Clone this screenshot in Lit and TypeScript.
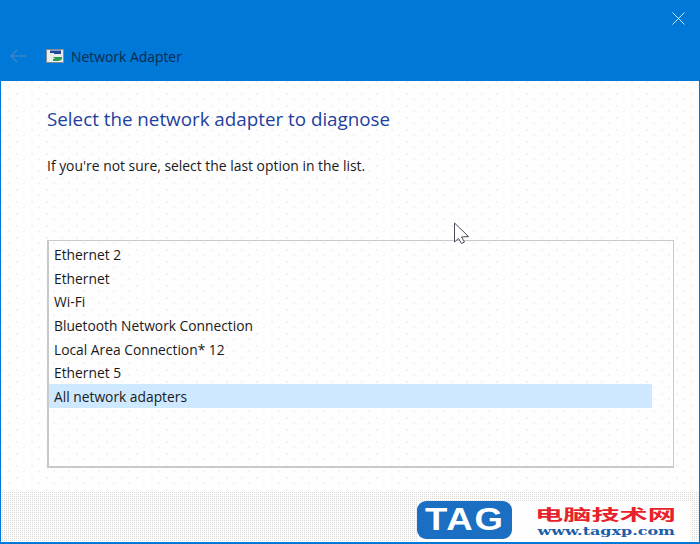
import { LitElement, html, css } from "lit";
import { customElement } from "lit/decorators.js";

@customElement("app-root")
export class AppRoot extends LitElement {
  static styles = css`
    :host { display: block; width: 700px; height: 544px; font-family: "Open Sans", "Noto Sans", sans-serif; }
    .win { width: 700px; height: 544px; box-sizing: border-box; display: flex; flex-direction: column; background: #0078d7; padding: 0 1px 2px 1px; overflow: hidden; }
    .head { height: 81px; flex: none; display: flex; flex-direction: column; }
    .closeRow { height: 36px; flex: none; display: flex; justify-content: flex-end; align-items: flex-start; padding: 12px 14px 0 0; box-sizing: border-box; }
    .crumb { display: flex; align-items: center; margin-top: 4px; height: 32px; padding-left: 9px; }
    .back { width: 17px; height: 14px; margin-right: 19px; flex: none; }
    .ttl { font-size: 13.9px; color: #0c2a4e; margin-left: 7px; }
    .icon { width: 18px; height: 14px; flex: none; }
    .body {
      flex: 1; position: relative; background-color: #fefefe; display: flex; flex-direction: column;
      background-image:
        radial-gradient(circle at 1px 1px, #dfe1e3 0.55px, transparent 0.8px),
        radial-gradient(circle at 8px 6px, #e3e5e7 0.55px, transparent 0.8px);
      background-size: 15px 12px, 15px 12px;
    }
    .main { flex: 1; padding: 26px 25px 0 46px; display: flex; flex-direction: column; }
    h1 { margin: 0; font-weight: 400; font-size: 18.8px; line-height: 24px; color: #1e3f9e; }
    p { margin: 25px 0 0; font-size: 13.9px; line-height: 20px; color: #1a1a1a; }
    .list { margin-top: 64px; height: 228px; box-sizing: border-box; border: 2px solid #c9c9c9; border-width: 1px 1px 2px 2px; padding: 1px 21px 0 0; display: flex; flex-direction: column; }
    .item { height: 23.7px; box-sizing: border-box; padding: 3px 0 0 5px; line-height: 19.7px; font-size: 13.8px; color: #1a1a1a; flex: none; }
    .item.sel { background: #cde8ff; }
    .cursor { position: absolute; left: 452px; top: 141px; width: 18px; height: 24px; }
    .foot {
      height: 50px; flex: none; background-color: #fefefe;
      background-image: conic-gradient(#d9d9d9 25%, transparent 0);
      background-size: 2px 2px;
    }
    .wm { position: absolute; right: 8px; bottom: 0; width: 274px; height: 41px; background: #fefefe; display: flex; align-items: flex-start; }
    .tag { width: 95px; height: 38px; border-radius: 9px; background: #1b6fc2; color: #fff; font: 700 31px/37px "Liberation Sans", sans-serif; text-align: center; flex: none; }
    .tag span { display: inline-block; transform: scaleX(1.18); letter-spacing: 1.5px; }
    .wmText { margin-left: 21px; width: 146px; display: flex; flex-direction: column; align-items: center; padding-top: 4px; }
    .cn { color: #e8222a; font: 700 15px/18px "Noto Sans CJK SC", sans-serif; transform: scaleX(1.88); white-space: nowrap; }
    .url { color: #1b5fa8; font: 700 10.5px/12px "DejaVu Serif", serif; transform: scaleX(1.52); white-space: nowrap; margin-top: 2px; }
  `;

  render() {
    const items = ["Ethernet 2", "Ethernet", "Wi-Fi", "Bluetooth Network Connection", "Local Area Connection* 12", "Ethernet 5"];
    return html`<div class="win">
      <div class="head">
        <div class="closeRow">
          <svg width="13" height="13" viewBox="0 0 13 13"><path d="M.5.5l12 12M12.5.5l-12 12" stroke="#cfe6f8" stroke-width="1" fill="none"/></svg>
        </div>
        <div class="crumb">
          <svg class="back" viewBox="0 0 17 14"><path d="M1 7h15M7 1L1 7l6 6" stroke="#3d82c4" stroke-width="1.5" fill="none"/></svg>
          <svg class="icon" viewBox="0 0 18 14">
            <rect width="18" height="14" fill="#7f8d99"/>
            <rect x="1" y="1" width="16" height="12" fill="#e6ecec"/>
            <path d="M4 1.500h11v3.500H8v-1H4z" fill="#23459c"/>
            <path d="M7 8h9v1.500c0 1.500-2 2.500-4 2.500H7v-2h2z" fill="#2c9a4f"/>
          </svg>
          <span class="ttl">Network Adapter</span>
        </div>
      </div>
      <div class="body">
        <div class="main">
          <h1>Select the network adapter to diagnose</h1>
          <p>If you're not sure, select the last option in the list.</p>
          <div class="list">
            ${items.map((t) => html`<div class="item">${t}</div>`)}
            <div class="item sel">All network adapters</div>
          </div>
        </div>
        <div class="foot"></div>
        <svg class="cursor" viewBox="0 0 18 24"><path d="M1.500 1v19l4-3.500 3 5 3-1.500-3-5 7-.5z" fill="#fff" stroke="#4a4a5a" stroke-width="1"/></svg>
        <div class="wm">
          <div class="tag"><span>TAG</span></div>
          <div class="wmText"><div class="cn">电脑技术网</div><div class="url">www.tagxp.com</div></div>
        </div>
      </div>
    </div>`;
  }
}
